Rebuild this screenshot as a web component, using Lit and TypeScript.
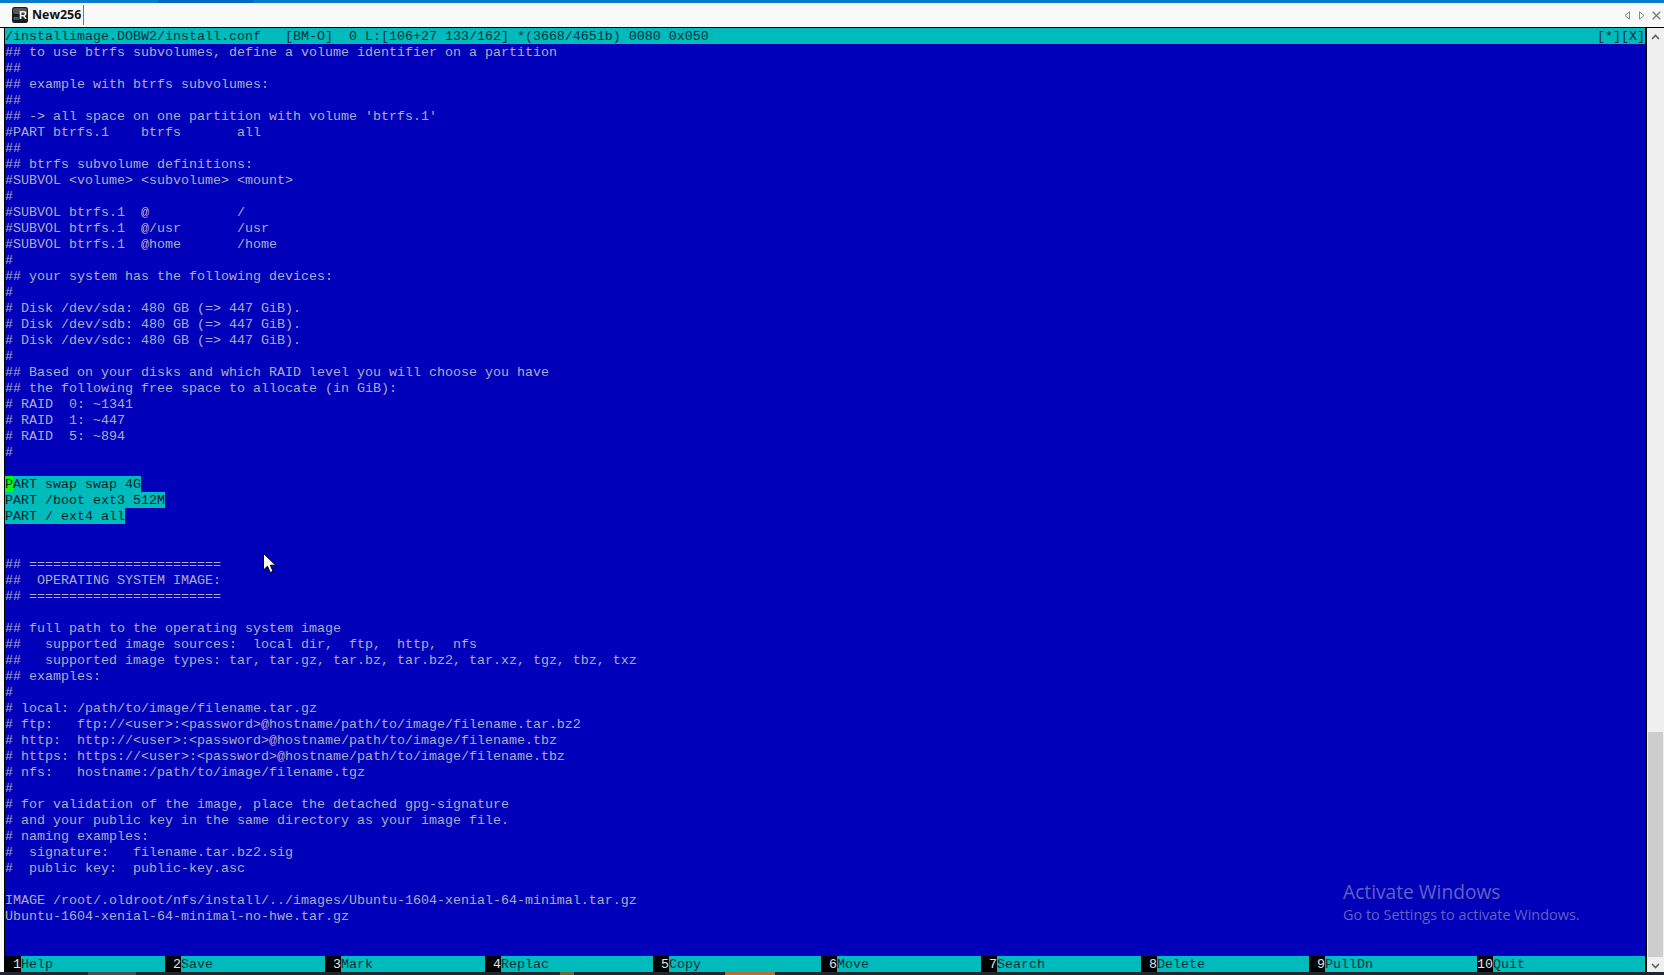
import { LitElement, html, css } from "lit";
import { customElement } from "lit/decorators.js";

const rows: string[] = [
  "## to use btrfs subvolumes, define a volume identifier on a partition",
  "##",
  "## example with btrfs subvolumes:",
  "##",
  "## -> all space on one partition with volume 'btrfs.1'",
  "#PART btrfs.1    btrfs       all",
  "##",
  "## btrfs subvolume definitions:",
  "#SUBVOL <volume> <subvolume> <mount>",
  "#",
  "#SUBVOL btrfs.1  @           /",
  "#SUBVOL btrfs.1  @/usr       /usr",
  "#SUBVOL btrfs.1  @home       /home",
  "#",
  "## your system has the following devices:",
  "#",
  "# Disk /dev/sda: 480 GB (=> 447 GiB).",
  "# Disk /dev/sdb: 480 GB (=> 447 GiB).",
  "# Disk /dev/sdc: 480 GB (=> 447 GiB).",
  "#",
  "## Based on your disks and which RAID level you will choose you have",
  "## the following free space to allocate (in GiB):",
  "# RAID  0: ~1341",
  "# RAID  1: ~447",
  "# RAID  5: ~894",
  "#",
  "",
  "@PART swap swap 4G",
  "@PART /boot ext3 512M",
  "@PART / ext4 all",
  "",
  "",
  "## ========================",
  "##  OPERATING SYSTEM IMAGE:",
  "## ========================",
  "",
  "## full path to the operating system image",
  "##   supported image sources:  local dir,  ftp,  http,  nfs",
  "##   supported image types: tar, tar.gz, tar.bz, tar.bz2, tar.xz, tgz, tbz, txz",
  "## examples:",
  "#",
  "# local: /path/to/image/filename.tar.gz",
  "# ftp:   ftp://<user>:<password>@hostname/path/to/image/filename.tar.bz2",
  "# http:  http://<user>:<password>@hostname/path/to/image/filename.tbz",
  "# https: https://<user>:<password>@hostname/path/to/image/filename.tbz",
  "# nfs:   hostname:/path/to/image/filename.tgz",
  "#",
  "# for validation of the image, place the detached gpg-signature",
  "# and your public key in the same directory as your image file.",
  "# naming examples:",
  "#  signature:   filename.tar.bz2.sig",
  "#  public key:  public-key.asc",
  "",
  "IMAGE /root/.oldroot/nfs/install/../images/Ubuntu-1604-xenial-64-minimal.tar.gz",
  "Ubuntu-1604-xenial-64-minimal-no-hwe.tar.gz",
  "",
  "",
];

const keys: [string, string, number][] = [
  [" 1", "Help", 20],
  [" 2", "Save", 20],
  [" 3", "Mark", 20],
  [" 4", "Replac", 21],
  [" 5", "Copy", 21],
  [" 6", "Move", 20],
  [" 7", "Search", 20],
  [" 8", "Delete", 21],
  [" 9", "PullDn", 21],
  ["10", "Quit", 21],
];

@customElement("app-root")
export class AppRoot extends LitElement {
  static styles = css`
    :host {
      display: flex;
      flex-direction: column;
      width: 1664px;
      height: 975px;
      overflow: hidden;
      background: #f9f9f9;
    }
    .accent {
      display: flex;
      height: 3px;
      flex: none;
      background: #0a7bcc;
    }
    .accent i {
      width: 95px;
      margin-left: 158px;
      background: #0067c0;
    }
    .tabs {
      display: flex;
      align-items: center;
      flex: none;
      height: 25px;
      padding-left: 12px;
      box-sizing: border-box;
      background: #f9f9f9;
      border-bottom: 1px solid #000;
    }
    .logo {
      width: 16px;
      height: 16px;
      flex: none;
    }
    .logo text {
      font-family: "Liberation Sans", sans-serif;
      font-weight: 700;
    }
    .tab-name {
      margin-left: 4px;
      padding-right: 2px;
      height: 20px;
      font: 700 12.4px/20px "Open Sans", sans-serif;
      color: #111;
      border-right: 1px solid #777;
    }
    .nav {
      display: flex;
      gap: 5px;
      margin-left: auto;
      margin-right: 3px;
    }
    .nav svg {
      width: 9px;
      height: 9px;
    }
    .nav svg.x {
      margin-left: 1px;
    }
    .main {
      display: flex;
      flex: 1;
      min-height: 0;
    }
    .gutter {
      width: 4px;
      flex: none;
      background: #f9f9f9;
      border-right: 1px solid #000;
    }
    .term {
      position: relative;
      width: 1640px;
      flex: none;
      background: #0000bb;
      color: #aeaec2;
      font: 13.333px/18px "Liberation Mono", monospace;
    }
    .line {
      height: 16px;
      white-space: pre;
    }
    .status {
      display: flex;
      justify-content: space-between;
      background: #00bbbb;
      color: #04303a;
    }
    .sel {
      display: inline-block;
      vertical-align: top;
      height: 16px;
      background: #00bbbb;
      color: #06232c;
    }
    .mark {
      display: inline-block;
      vertical-align: top;
      height: 16px;
      background: #00ff00;
      color: #062a10;
    }
    .fkeys {
      display: flex;
    }
    .fkey {
      display: flex;
      background: #00bbbb;
      color: #04303a;
    }
    .fkey b {
      font-weight: 400;
      background: #000;
      color: #e4e4e4;
    }
    .edge {
      width: 2px;
      flex: none;
      background: #000;
    }
    .scroll {
      display: flex;
      flex-direction: column;
      align-items: center;
      flex: 1;
      background: #f0f0f0;
    }
    .scroll svg {
      width: 9px;
      height: 6px;
      flex: none;
    }
    .scroll .up {
      margin-top: 6px;
    }
    .scroll .dn {
      margin-top: 6px;
    }
    .scroll .pad {
      height: 3px;
      flex: none;
    }
    .thumb {
      width: 15px;
      height: 225px;
      margin-top: auto;
      background: #cdcdcd;
    }
    .taskbar {
      display: flex;
      flex: none;
      height: 3px;
      background: #23262b;
    }
    .taskbar i {
      display: block;
    }
    .t1 { width: 48px; margin-left: 88px; background: #4a4d52; }
    .t2 { width: 14px; margin-left: 424px; background: #6d6a33; }
    .t3 { width: 50px; margin-left: 151px; background: #b5702e; }
    .cursor {
      position: absolute;
      left: 258px;
      top: 525px;
      width: 13px;
      height: 20px;
    }
    .activate {
      position: absolute;
      left: 1338px;
      top: 851px;
      color: #6262bb;
      font-family: "Open Sans", sans-serif;
    }
    .activate div:first-child {
      font-size: 19.2px;
      line-height: 26px;
    }
    .activate div:last-child {
      font-size: 14.45px;
      line-height: 20px;
    }
  `;

  private row(text: string) {
    if (text.startsWith("@")) {
      const t = text.slice(1);
      const first = text.startsWith("@PART swap");
      return html`<div class="line">${first
        ? html`<span class="sel"><span class="mark">${t[0]}</span>${t.slice(1)}</span>`
        : html`<span class="sel">${t}</span>`}</div>`;
    }
    return html`<div class="line">${text}</div>`;
  }

  render() {
    return html`
      <div class="accent"><i></i></div>
      <div class="tabs">
        <svg class="logo" viewBox="0 0 16 16">
          <rect x="0" y="0" width="16" height="16" rx="2.5" fill="#1c1c1f"></rect>
          <rect x="1" y="1" width="14" height="6" rx="2" fill="#55565a"></rect>
          <text x="1.5" y="12.5" font-size="6" fill="#3d8bd9">m</text>
          <text x="7" y="11.5" font-size="11" fill="#f2f2f2">R</text>
        </svg>
        <span class="tab-name">New256</span>
        <div class="nav">
          <svg viewBox="0 0 9 9" fill="none" stroke="#8a8a8a"><path d="M6.5.8v7.4L2 4.5z"></path></svg>
          <svg viewBox="0 0 9 9" fill="none" stroke="#8a8a8a"><path d="M2.5.8v7.4L7 4.5z"></path></svg>
          <svg class="x" viewBox="0 0 9 9" fill="none" stroke="#777" stroke-width="1.3"><path d="M.7.7l7.6 7.6M8.3.7L.7 8.3"></path></svg>
        </div>
      </div>
      <div class="main">
        <div class="gutter"></div>
        <div class="term">
          <div class="line status"><span>/installimage.DOBW2/install.conf   [BM-O]  0 L:[106+27 133/162] *(3668/4651b) 0080 0x050</span><span>[*][X]</span></div>
          ${rows.map((r) => this.row(r))}
          <div class="line fkeys">
            ${keys.map(
              ([n, label, cols]) =>
                html`<div class="fkey" style="width:${cols * 8}px"><b>${n}</b>${label}</div>`
            )}
          </div>
          <svg class="cursor" viewBox="0 0 13 20">
            <path d="M.5.5v16.5l4-3.8 2.7 6.3 2.8-1.2-2.7-6.1h5.4z" fill="#fff" stroke="#000" stroke-width="1"></path>
          </svg>
          <div class="activate">
            <div>Activate Windows</div>
            <div>Go to Settings to activate Windows.</div>
          </div>
        </div>
        <div class="edge"></div>
        <div class="scroll">
          <svg class="up" viewBox="0 0 9 6" fill="none" stroke="#606060" stroke-width="1.6"><path d="M1 5l3.5-3.5L8 5"></path></svg>
          <div class="thumb"></div>
          <svg class="dn" viewBox="0 0 9 6" fill="none" stroke="#606060" stroke-width="1.6"><path d="M1 1l3.5 3.5L8 1"></path></svg>
          <div class="pad"></div>
        </div>
      </div>
      <div class="taskbar"><i class="t1"></i><i class="t2"></i><i class="t3"></i></div>
    `;
  }
}
